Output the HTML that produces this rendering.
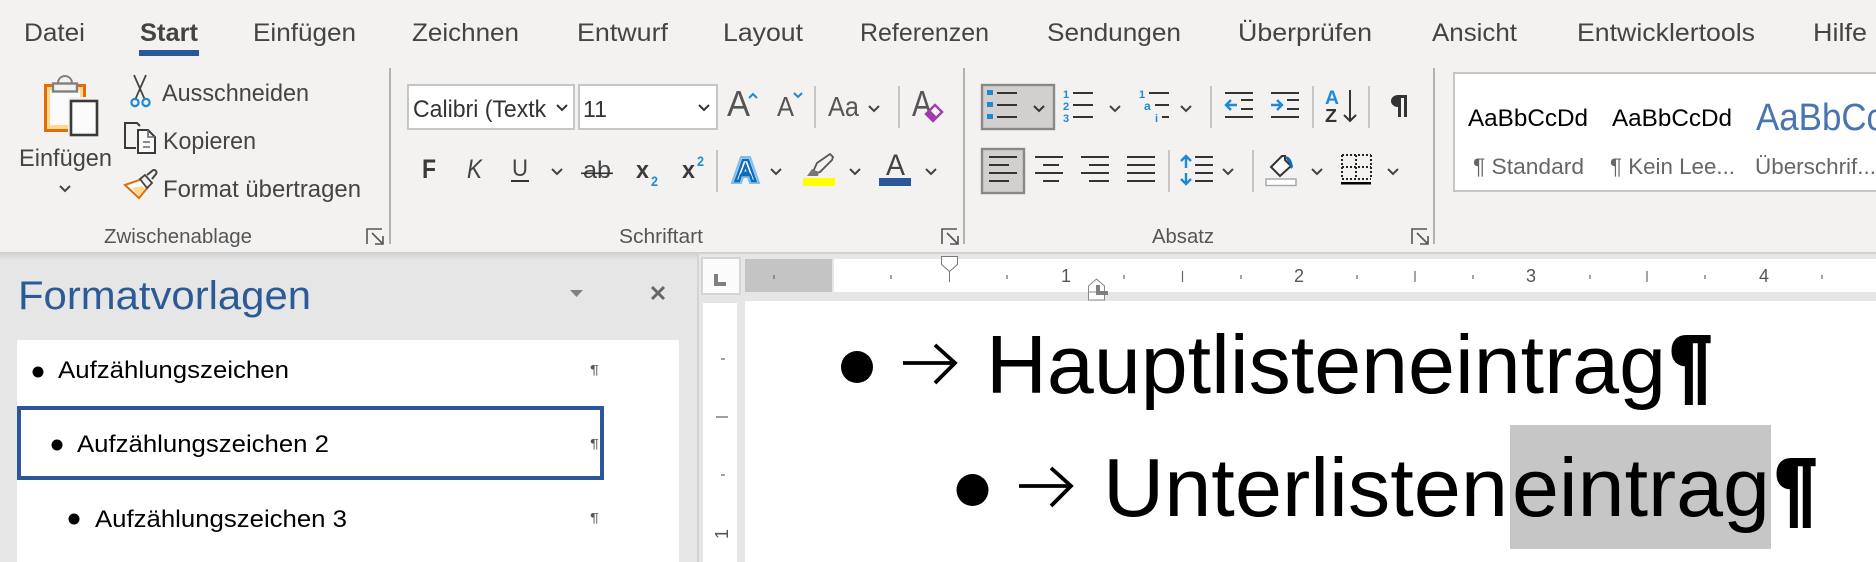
<!DOCTYPE html>
<html lang="de"><head><meta charset="utf-8"><title>Word</title>
<style>
html,body{margin:0;padding:0;background:#f3f2f1;width:1876px;height:562px;overflow:hidden}
svg{display:block}
text{font-family:"Liberation Sans",sans-serif;white-space:pre}
.t{font-size:25px;fill:#444}
.r{font-size:24px;fill:#444}
.g{font-size:20px;fill:#555}
.l{stroke:#333;stroke-width:2;fill:none}
.b{stroke:#1e8ad6;fill:none;stroke-width:2.4}
.c{stroke:#444;stroke-width:2;fill:none}
.tk{stroke:#666;stroke-width:1.2}
.n{font-size:18px;fill:#555}
.d{font-size:83px;fill:#000}
.p{font-size:24px;fill:#000}
</style></head><body>
<svg width="1876" height="562" viewBox="0 0 1876 562" xmlns="http://www.w3.org/2000/svg">
<defs><linearGradient id="sh" x1="0" y1="0" x2="0" y2="1"><stop offset="0" stop-color="#cfcfcf"/><stop offset="1" stop-color="#e6e6e6"/></linearGradient></defs>
<rect width="1876" height="562" fill="#e6e6e6"/>
<rect width="1876" height="252" fill="#f3f2f1"/>
<rect y="252" width="1876" height="8" fill="url(#sh)"/>

<!-- tabs -->
<text class="t" x="24" y="41" textLength="61" lengthAdjust="spacingAndGlyphs">Datei</text>
<text class="t" x="140" y="41" textLength="58" lengthAdjust="spacingAndGlyphs" font-weight="700">Start</text>
<rect x="139" y="50" width="60" height="6" fill="#2b579a"/>
<text class="t" x="253" y="41" textLength="103" lengthAdjust="spacingAndGlyphs">Einfügen</text>
<text class="t" x="412" y="41" textLength="107" lengthAdjust="spacingAndGlyphs">Zeichnen</text>
<text class="t" x="577" y="41" textLength="91" lengthAdjust="spacingAndGlyphs">Entwurf</text>
<text class="t" x="723" y="41" textLength="80" lengthAdjust="spacingAndGlyphs">Layout</text>
<text class="t" x="860" y="41" textLength="129" lengthAdjust="spacingAndGlyphs">Referenzen</text>
<text class="t" x="1047" y="41" textLength="134" lengthAdjust="spacingAndGlyphs">Sendungen</text>
<text class="t" x="1238" y="41" textLength="134" lengthAdjust="spacingAndGlyphs">Überprüfen</text>
<text class="t" x="1432" y="41" textLength="85" lengthAdjust="spacingAndGlyphs">Ansicht</text>
<text class="t" x="1577" y="41" textLength="178" lengthAdjust="spacingAndGlyphs">Entwicklertools</text>
<text class="t" x="1813" y="41" textLength="54" lengthAdjust="spacingAndGlyphs">Hilfe</text>

<!-- group separators -->
<rect x="389" y="68" width="2" height="176" fill="#b3b0ad"/>
<rect x="963" y="68" width="2" height="176" fill="#b3b0ad"/>
<rect x="1433" y="68" width="2" height="176" fill="#b3b0ad"/>

<!-- clipboard group -->
<rect x="45.5" y="85.5" width="39" height="45" fill="#fcd98f" stroke="#e36c0a" stroke-width="3"/>
<rect x="50" y="90" width="30" height="35" fill="#fbfbfb"/>
<path d="M58 83 a7 7 0 0 1 14 0" fill="#f3f2f1" stroke="#808080" stroke-width="2"/>
<rect x="53" y="83.5" width="24" height="8" fill="#f3f2f1" stroke="#808080" stroke-width="2.4"/>
<rect x="68" y="97" width="32" height="42" fill="#f3f2f1"/>
<rect x="71" y="101" width="26" height="34" fill="#fbfbfb" stroke="#3a3a3a" stroke-width="2.6"/>
<text class="r" x="19" y="166" textLength="93" lengthAdjust="spacingAndGlyphs">Einfügen</text>
<path class="c" d="M60 186l5 5l5-5"/>
<!-- scissors -->
<path d="M146 75L135 100M134 75L145 100" stroke="#444" stroke-width="1.8" fill="none"/>
<circle cx="135" cy="102.5" r="3.6" fill="none" stroke="#1e8ad6" stroke-width="2.2"/>
<circle cx="146" cy="102.5" r="3.6" fill="none" stroke="#1e8ad6" stroke-width="2.2"/>
<text class="r" x="162" y="101" textLength="147" lengthAdjust="spacingAndGlyphs">Ausschneiden</text>
<!-- copy -->
<path d="M136 148h-11v-25h12l3 3" fill="none" stroke="#3a3a3a" stroke-width="2"/>
<path d="M138 130h10l7 7v16h-17z" fill="#fbfbfb" stroke="#3a3a3a" stroke-width="2"/>
<path d="M148 130v7h7M143 142h7M143 147h7" fill="none" stroke="#666" stroke-width="1.6"/>
<text class="r" x="163" y="149" textLength="93" lengthAdjust="spacingAndGlyphs">Kopieren</text>
<!-- format painter -->
<path d="M125 185l17-6l6 8l-9 11z" fill="#fff" stroke="#e36c0a" stroke-width="2"/>
<path d="M132 188l7 8l6-7l-3-3z" fill="#fcd98f"/>
<path d="M140 179l5-4l7 8l-5 5z" fill="#f3f2f1" stroke="#444" stroke-width="1.8"/>
<path d="M147 175l5-4a2.500 2.500 0 0 1 4 3l-4 5" fill="#f3f2f1" stroke="#444" stroke-width="2"/>
<text class="r" x="163" y="197" textLength="198" lengthAdjust="spacingAndGlyphs">Format übertragen</text>
<text class="g" x="104" y="243" textLength="148" lengthAdjust="spacingAndGlyphs">Zwischenablage</text>
<path d="M382 229h-15v15M372 233l11 11M383 236v8h-8" stroke="#555" stroke-width="1.6" fill="none"/>

<!-- font group -->
<rect x="408" y="85" width="166" height="44" fill="#fff" stroke="#c8c6c4" stroke-width="2"/>
<svg x="409" y="86" width="137" height="42" viewBox="409 86 137 42"><text x="413" y="117" font-size="24" fill="#333" textLength="146" lengthAdjust="spacingAndGlyphs">Calibri (Textkö</text></svg>
<rect x="579" y="85" width="138" height="44" fill="#fff" stroke="#c8c6c4" stroke-width="2"/>
<text x="583" y="117" font-size="23" fill="#333" textLength="24" lengthAdjust="spacingAndGlyphs">11</text>
<path d="M557 105l5 5l5-5M699 105l5 5l5-5" fill="none" stroke="#333" stroke-width="2"/>
<text x="727" y="116" font-size="36" fill="#555" textLength="23" lengthAdjust="spacingAndGlyphs">A</text>
<path d="M749 98l4-4l4 4" fill="none" stroke="#1e8ad6" stroke-width="2"/>
<text x="777" y="116" font-size="28" fill="#555" textLength="17" lengthAdjust="spacingAndGlyphs">A</text>
<path d="M794 93l4 4l4-4" fill="none" stroke="#1e8ad6" stroke-width="2"/>
<rect x="814" y="86" width="2" height="42" fill="#c8c6c4"/>
<text x="828" y="116" font-size="28" fill="#555" textLength="31" lengthAdjust="spacingAndGlyphs">Aa</text>
<path class="c" d="M869 106l5 5l5-5"/>
<rect x="898" y="86" width="2" height="42" fill="#c8c6c4"/>
<text x="912" y="116" font-size="36" fill="#555" textLength="20" lengthAdjust="spacingAndGlyphs">A</text>
<path d="M935 105l7 7l-9 9l-7-7z" fill="#fff" stroke="#a23ab0" stroke-width="2.4"/>
<path d="M926 114l7 7l4-4l-7-7z" fill="#a23ab0"/>

<text x="422" y="178" font-size="27" font-weight="700" fill="#3a3a3a" textLength="14" lengthAdjust="spacingAndGlyphs">F</text>
<text x="467" y="178" font-size="27" font-style="italic" fill="#444" textLength="15" lengthAdjust="spacingAndGlyphs">K</text>
<text x="512" y="176" font-size="24" fill="#444" textLength="16" lengthAdjust="spacingAndGlyphs">U</text>
<rect x="511" y="180" width="18" height="2" fill="#333"/>
<path class="c" d="M552 169l5 5l5-5"/>
<text x="583" y="178" font-size="24" fill="#444" textLength="28" lengthAdjust="spacingAndGlyphs">ab</text>
<rect x="581" y="172.500" width="32" height="1.600" fill="#333"/>
<text x="636" y="178" font-size="24" font-weight="700" fill="#3a3a3a" textLength="13" lengthAdjust="spacingAndGlyphs">x</text>
<text x="651" y="186" font-size="14" font-weight="700" fill="#1e8ad6" textLength="7" lengthAdjust="spacingAndGlyphs">2</text>
<text x="682" y="178" font-size="24" font-weight="700" fill="#3a3a3a" textLength="13" lengthAdjust="spacingAndGlyphs">x</text>
<text x="697" y="166" font-size="14" font-weight="700" fill="#1e8ad6" textLength="7" lengthAdjust="spacingAndGlyphs">2</text>
<rect x="716" y="150" width="2" height="42" fill="#c8c6c4"/>
<path d="M741 157h9l9 26h-9l-2-6h-5l-2 6h-9z" fill="#bfe0f5" stroke="#7fbfe8" stroke-width="2"/>
<path d="M743 160h5l7.500 21h-3.500l-2-6h-9l-2 6h-3.500z M745.500 165l-3 8h6z" fill="#fff" stroke="#0f6cbd" stroke-width="2.400" fill-rule="evenodd"/>
<path class="c" d="M771 169l5 5l5-5"/>
<path d="M812 174l5-11l13-9l3 3l-1 3l-12 12z" fill="#f3f2f1" stroke="#555" stroke-width="1.800"/>
<path d="M807 176l5-7l7 3l-1 4z" fill="#777"/>
<rect x="803" y="178" width="32" height="8" fill="#ffff00"/>
<path class="c" d="M850 169l5 5l5-5"/>
<text x="886" y="175" font-size="30" fill="#444" textLength="19" lengthAdjust="spacingAndGlyphs">A</text>
<rect x="879" y="178" width="32" height="8" fill="#2b579a"/>
<path class="c" d="M926 169l5 5l5-5"/>
<text class="g" x="619" y="243" textLength="84" lengthAdjust="spacingAndGlyphs">Schriftart</text>
<path d="M957 229h-15v15M947 233l11 11M958 236v8h-8" stroke="#555" stroke-width="1.600" fill="none"/>

<!-- paragraph group -->
<rect x="982" y="85" width="72" height="44" fill="#d2d0ce" stroke="#8a8886" stroke-width="2.400"/>
<path fill="#1e8ad6" d="M987 90h6v5h-6zM987 102h6v5h-6zM987 114h6v5h-6z"/>
<path class="l" d="M997 93h20M997 105h20M997 117h20M1073 93h20M1073 105h20M1073 117h20M1149 93h20M1155 105h14M1162 117h7"/>
<path d="M1034 106l5 5l5-5" fill="none" stroke="#333" stroke-width="2"/>
<text x="1063" y="98" font-size="11" font-weight="700" fill="#1e8ad6">1</text>
<text x="1063" y="110" font-size="11" font-weight="700" fill="#1e8ad6">2</text>
<text x="1063" y="122" font-size="11" font-weight="700" fill="#1e8ad6">3</text>
<path class="c" d="M1110 106l5 5l5-5"/>
<text x="1139" y="98" font-size="11" font-weight="700" fill="#1e8ad6">1</text>
<text x="1144" y="110" font-size="12" font-weight="700" fill="#1e8ad6">a</text>
<text x="1155" y="122" font-size="11" font-weight="700" fill="#1e8ad6">i</text>
<path class="c" d="M1181 106l5 5l5-5"/>
<rect x="1210" y="86" width="2" height="42" fill="#c8c6c4"/>
<path class="l" d="M1225 93h28M1241 100h12M1241 109h12M1225 117h28M1271 93h28M1287 100h12M1287 109h12M1271 117h28"/>
<path class="b" d="M1237 105h-11M1231 100l-5 5l5 5M1271 105h11M1277 100l5 5l-5 5"/>
<rect x="1312" y="86" width="2" height="42" fill="#c8c6c4"/>
<text x="1325" y="104" font-size="19" font-weight="700" fill="#1e8ad6" textLength="14" lengthAdjust="spacingAndGlyphs">A</text>
<text x="1325" y="122" font-size="18" fill="#333" textLength="12" lengthAdjust="spacingAndGlyphs" font-weight="700">Z</text>
<path d="M1350 90v31M1344 115l6 6l6-6" stroke="#333" stroke-width="2" fill="none"/>
<rect x="1368" y="86" width="2" height="42" fill="#c8c6c4"/>
<path d="M1402 95h5v22h-3v-19h-3v19h-3v-10a7 6 0 0 1 0-12z" fill="#333"/>

<rect x="982" y="149" width="42" height="44" fill="#d2d0ce" stroke="#8a8886" stroke-width="2.400"/>
<path class="l" d="M989 157h28M989 165h20M989 173h28M989 181h20M1035 157h28M1043 165h16M1035 173h28M1043 181h16M1081 157h28M1089 165h20M1081 173h28M1089 181h20M1127 157h28M1127 165h28M1127 173h28M1127 181h28M1195 157h18M1195 165h18M1195 173h18M1195 181h18"/>
<rect x="1168" y="150" width="2" height="42" fill="#c8c6c4"/>
<path class="b" d="M1186 157v11M1181 161l5-5l5 5M1186 173v11M1181 179l5 5l5-5"/>
<path class="c" d="M1223 169l5 5l5-5"/>
<rect x="1252" y="150" width="2" height="42" fill="#c8c6c4"/>
<path d="M1271 167l11-11l3 0l0 4l0 0l6 6l-11 10z" fill="#fbfbfb" stroke="#333" stroke-width="2"/>
<path d="M1285 157c3-2 7 2 8 10l-2 2l-2-6z" fill="#0f6cbd"/>
<rect x="1266" y="179" width="30" height="6.500" fill="#fff" stroke="#a6a6a6" stroke-width="1.400"/>
<path class="c" d="M1312 169l5 5l5-5"/>
<path d="M1342 155h29M1342 167h29M1342 179h29M1342 155v24M1356 155v24M1371 155v24" stroke="#222" stroke-width="2" stroke-dasharray="2 2" fill="none"/>
<rect x="1341" y="182" width="30" height="2.500" fill="#000"/>
<path class="c" d="M1388 169l5 5l5-5"/>
<text class="g" x="1152" y="243" textLength="62" lengthAdjust="spacingAndGlyphs">Absatz</text>
<path d="M1427 229h-15v15M1417 233l11 11M1428 236v8h-8" stroke="#555" stroke-width="1.600" fill="none"/>

<!-- styles gallery -->
<rect x="1454" y="73" width="430" height="118" fill="#fff" stroke="#c8c6c4" stroke-width="2"/>
<text x="1468" y="126" font-size="24" fill="#000" textLength="120" lengthAdjust="spacingAndGlyphs">AaBbCcDd</text>
<text x="1612" y="126" font-size="24" fill="#000" textLength="120" lengthAdjust="spacingAndGlyphs">AaBbCcDd</text>
<text x="1756" y="130" font-size="38" fill="#4a74b0" textLength="128" lengthAdjust="spacingAndGlyphs">AaBbCc</text>
<text x="1473" y="174" font-size="22" fill="#666" textLength="111" lengthAdjust="spacingAndGlyphs">¶ Standard</text>
<text x="1610" y="174" font-size="22" fill="#666" textLength="125" lengthAdjust="spacingAndGlyphs">¶ Kein Lee...</text>
<text x="1755" y="174" font-size="22" fill="#666" textLength="121" lengthAdjust="spacingAndGlyphs">Überschrif...</text>

<!-- task pane -->
<text x="18" y="309" font-size="40" fill="#2a5a98" textLength="293" lengthAdjust="spacingAndGlyphs">Formatvorlagen</text>
<path d="M570 290h13l-6.500 7z" fill="#808080"/>
<path d="M652 287l12 12M664 287l-12 12" stroke="#666" stroke-width="3"/>
<rect x="17" y="340" width="662" height="222" fill="#fff"/>
<rect x="19" y="408" width="583" height="70" fill="#fff" stroke="#2b579a" stroke-width="4"/>
<ellipse cx="38" cy="372" rx="5.500" ry="5.500" fill="#000"/>
<text class="p" x="58" y="378" textLength="231" lengthAdjust="spacingAndGlyphs">Aufzählungszeichen</text>
<ellipse cx="57" cy="445" rx="5.500" ry="5.500" fill="#000"/>
<text class="p" x="77" y="452" textLength="252" lengthAdjust="spacingAndGlyphs">Aufzählungszeichen 2</text>
<ellipse cx="74" cy="519" rx="5.500" ry="5.500" fill="#000"/>
<text class="p" x="95" y="527" textLength="252" lengthAdjust="spacingAndGlyphs">Aufzählungszeichen 3</text>
<text x="590" y="374" font-size="13" fill="#555" textLength="9" lengthAdjust="spacingAndGlyphs">¶</text>
<text x="590" y="448" font-size="13" fill="#555" textLength="9" lengthAdjust="spacingAndGlyphs">¶</text>
<text x="590" y="522" font-size="13" fill="#555" textLength="9" lengthAdjust="spacingAndGlyphs">¶</text>

<!-- doc area -->
<rect x="697" y="254" width="1179" height="308" fill="#e6e6e6"/>
<rect x="697" y="254" width="2" height="308" fill="#d4d4d4"/>
<rect x="702" y="258" width="38" height="36" fill="#fbfbfb" stroke="#d5d5d5" stroke-width="2"/>
<path d="M714 274h4v8h8v4h-12z" fill="#808080"/>
<rect x="703" y="303" width="34" height="259" fill="#fff"/>
<rect x="745" y="259" width="87" height="33" fill="#c4c4c4"/>
<rect x="834" y="259" width="1042" height="33" fill="#fff"/>
<rect x="745" y="301" width="1131" height="261" fill="#fff"/>
<path class="tk" d="M774 275v4M891 275v4M1007 275v4M1124 275v4M1241 275v4M1357 275v4M1473 275v4M1590 275v4M1705 275v4M1822 275v4M1182.500 271v11M1415 271v11M1647 271v11M721 359h4M721 475h4M716 417h12"/>
<path d="M941.500 256.500h16v8l-8 7l-8-7zM949.500 271v11" fill="#fff" stroke="#777" stroke-width="1"/>
<path d="M1096.500 279l8 7v6h-16v-6zM1088.500 292h16v8h-16z" fill="#fff" stroke="#888" stroke-width="1"/>
<path d="M1096 285h4v6h8v4h-12z" fill="#808080"/>
<text class="n" x="1061" y="282" textLength="10" lengthAdjust="spacingAndGlyphs">1</text>
<text class="n" x="1294" y="282" textLength="10" lengthAdjust="spacingAndGlyphs">2</text>
<text class="n" x="1526" y="282" textLength="10" lengthAdjust="spacingAndGlyphs">3</text>
<text class="n" x="1759" y="282" textLength="10" lengthAdjust="spacingAndGlyphs">4</text>
<text class="n" transform="translate(728 539) rotate(-90)" textLength="10" lengthAdjust="spacingAndGlyphs">1</text>

<!-- document text -->
<ellipse cx="857" cy="367" rx="16" ry="16" fill="#000"/>
<path d="M903 363h52M935 345l20 18l-20 20" fill="none" stroke="#000" stroke-width="3.800"/>
<text class="d" x="986" y="393" textLength="680" lengthAdjust="spacingAndGlyphs">Hauptlisteneintrag</text>
<text class="d" x="1670" y="393" font-weight="700" stroke="#000" stroke-width="2.500" textLength="42" lengthAdjust="spacingAndGlyphs">¶</text>
<rect x="1510" y="425" width="261" height="124" fill="#c6c6c6"/>
<ellipse cx="972.500" cy="490" rx="16" ry="16" fill="#000"/>
<path d="M1019 486h52M1051 468l20 18l-20 20" fill="none" stroke="#000" stroke-width="3.800"/>
<text class="d" x="1103" y="516" textLength="405" lengthAdjust="spacingAndGlyphs">Unterlisten</text>
<text class="d" x="1512" y="516" textLength="258" lengthAdjust="spacingAndGlyphs">eintrag</text>
<text class="d" x="1775" y="516" font-weight="700" stroke="#000" stroke-width="2.500" textLength="42" lengthAdjust="spacingAndGlyphs">¶</text>
</svg>
</body></html>
